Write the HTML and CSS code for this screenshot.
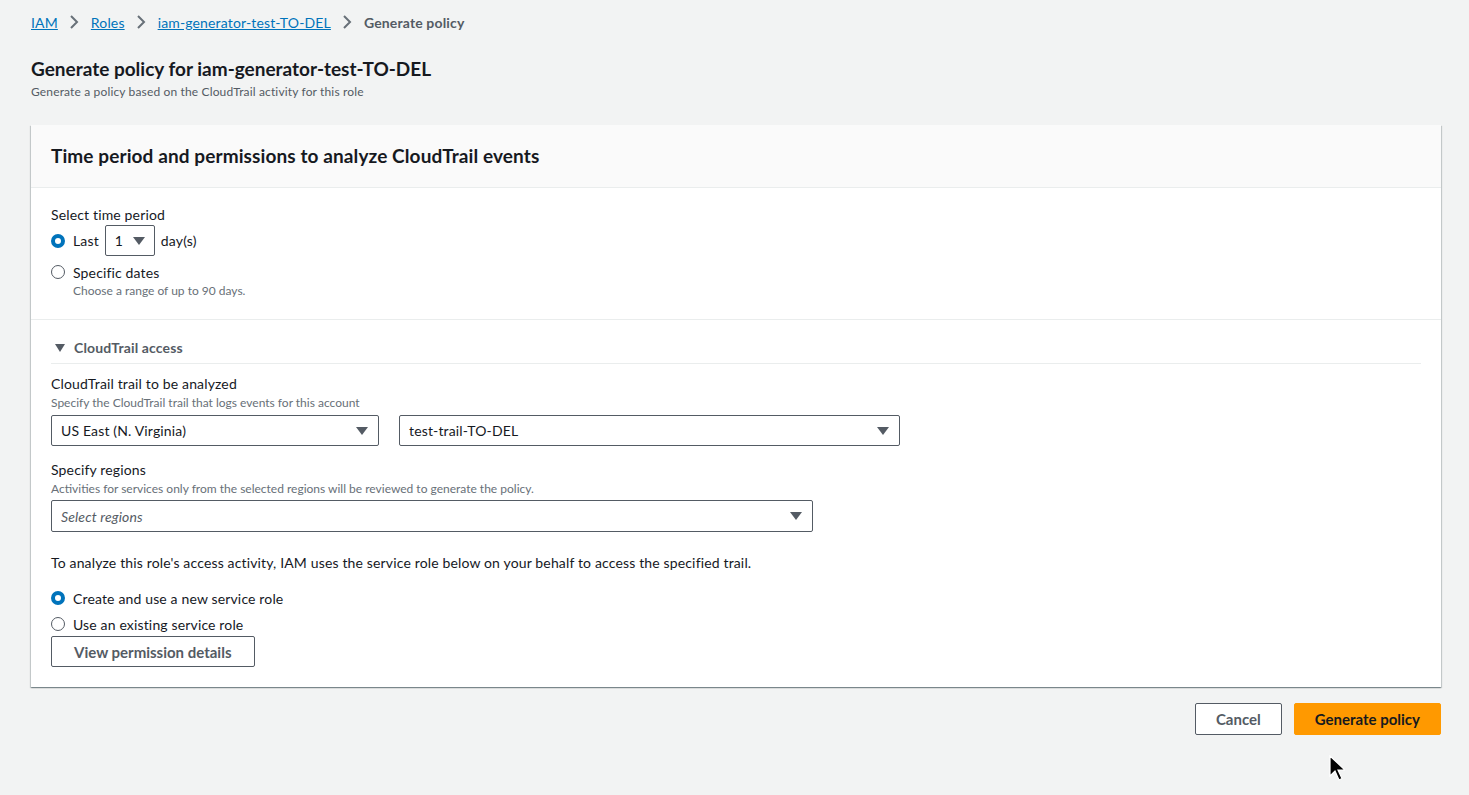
FILE: index.html
```
<!DOCTYPE html>
<html lang="en">
  <head>
    <meta charset="UTF-8" />
    <title>Generate policy</title>
    <link rel="stylesheet" href="styles.css">
  </head>
  <body>
    <nav class="breadcrumbs">
      <a href="#">IAM</a>
      <span class="chev"><svg width="10" height="14" viewBox="0 0 10 14"><path d="M2 1l6 6-6 6" fill="none" stroke="#687078" stroke-width="2"/></svg></span>
      <a href="#">Roles</a>
      <span class="chev"><svg width="10" height="14" viewBox="0 0 10 14"><path d="M2 1l6 6-6 6" fill="none" stroke="#687078" stroke-width="2"/></svg></span>
      <a href="#">iam-generator-test-TO-DEL</a>
      <span class="chev"><svg width="10" height="14" viewBox="0 0 10 14"><path d="M2 1l6 6-6 6" fill="none" stroke="#687078" stroke-width="2"/></svg></span>
      <span class="current">Generate policy</span>
    </nav>

    <div class="page-header">
      <h1>Generate policy for iam-generator-test-TO-DEL</h1>
      <p>Generate a policy based on the CloudTrail activity for this role</p>
    </div>

    <div class="card">
      <div class="card-header">
        <h2>Time period and permissions to analyze CloudTrail events</h2>
      </div>

      <div class="section">
        <div class="label">Select time period</div>
        <div class="radio-row">
          <span class="radio checked"></span>
          <span>Last</span>
          <span class="select small">1 <span class="caret"></span></span>
          <span>day(s)</span>
        </div>
        <div class="radio-row second">
          <span class="radio"></span>
          <span>Specific dates</span>
        </div>
        <div class="radio-desc">Choose a range of up to 90 days.</div>
      </div>

      <div class="section last">
        <div class="expander"><span class="exp-caret"></span>CloudTrail access</div>

        <div class="label">CloudTrail trail to be analyzed</div>
        <div class="desc">Specify the CloudTrail trail that logs events for this account</div>
        <div class="select-row">
          <div class="select region">US East (N. Virginia) <span class="caret"></span></div>
          <div class="select trail">test-trail-TO-DEL <span class="caret"></span></div>
        </div>

        <div class="label">Specify regions</div>
        <div class="desc">Activities for services only from the selected regions will be reviewed to generate the policy.</div>
        <div class="select regions"><em>Select regions</em> <span class="caret"></span></div>

        <p class="info">To analyze this role's access activity, IAM uses the service role below on your behalf to access the specified trail.</p>

        <div class="radio-row tight">
          <span class="radio checked"></span>
          <span>Create and use a new service role</span>
        </div>
        <div class="radio-row tight">
          <span class="radio"></span>
          <span>Use an existing service role</span>
        </div>
        <button class="btn details">View permission details</button>
      </div>
    </div>

    <div class="actions">
      <button class="btn">Cancel</button>
      <button class="btn primary">Generate policy</button>
    </div>

    <svg class="cursor" width="16" height="26" viewBox="0 0 16 26"><path d="M1 1v20l5-5 4 9 3-1.5-4-8.5h7z" fill="#000" stroke="#fff" stroke-width="1.2"/></svg>
  </body>
</html>
```

FILE: styles.css
```
body {
  margin: 0;
  background: #f2f3f3;
  font-family: Lato, "Liberation Sans", sans-serif;
  font-size: 14px;
  letter-spacing: 0.15px;
  color: #16191f;
  padding: 0 28px 0 31px;
  position: relative;
  height: 795px;
  box-sizing: border-box;
}
a {
  color: #0073bb;
}
.breadcrumbs {
  display: flex;
  align-items: center;
  height: 20px;
  padding-top: 12px;
  font-size: 14px;
}
.breadcrumbs a {
  text-decoration: underline;
}
.chev {
  display: flex;
  margin: 0 12px 0 11px;
}
.current {
  color: #545b64;
  font-weight: bold;
}
.page-header {
  padding-top: 24px;
}
.page-header h1 {
  margin: 0;
  font-size: 19px;
  line-height: 26px;
  font-weight: bold;
  letter-spacing: 0;
}
.page-header p {
  margin: 2px 0 0;
  font-size: 12px;
  line-height: 16px;
  color: #545b64;
}
.card {
  margin-top: 25px;
  background: #fff;
  box-shadow: 0 1px 1px 0 rgba(0, 28, 36, 0.3), 1px 1px 1px 0 rgba(0, 28, 36, 0.15), -1px 1px 1px 0 rgba(0, 28, 36, 0.15);
}
.card-header {
  background: #fafafa;
  border-bottom: 1px solid #eaeded;
  padding: 19px 20px 20px;
}
.card-header h2 {
  margin: 0;
  font-size: 19px;
  line-height: 23px;
  font-weight: bold;
  letter-spacing: 0.1px;
}
.section {
  padding: 17px 20px 20px;
  border-bottom: 1px solid #eaeded;
}
.section.last {
  border-bottom: none;
  padding-top: 12px;
}
.label {
  line-height: 20px;
}
.desc {
  font-size: 12px;
  line-height: 16px;
  color: #687078;
  margin-top: 1px;
  letter-spacing: 0;
}
.radio-row {
  display: flex;
  align-items: center;
  gap: 6px;
  height: 31px;
}
.radio-row.second {
  height: 22px;
  margin-top: 5px;
}
.radio-row.tight {
  height: 26px;
}
.radio {
  border: 1px solid #545b64;
  border-radius: 50%;
  margin: 0 2px 0 0;
  box-sizing: content-box;
  width: 12px;
  height: 12px;
}
.radio.checked {
  border: 4px solid #0073bb;
  width: 6px;
  height: 6px;
}
.radio-desc {
  font-size: 12px;
  line-height: 16px;
  color: #687078;
  padding-left: 22px;
  letter-spacing: 0;
}
.select {
  position: relative;
  border: 1px solid #545b64;
  border-radius: 2px;
  display: flex;
  align-items: center;
  box-sizing: border-box;
  padding: 0 9px;
  background: #fff;
}
.select.small {
  width: 50px;
  height: 31px;
}
.caret {
  position: absolute;
  right: 10px;
  top: 50%;
  margin-top: -4px;
  width: 0;
  height: 0;
  border-left: 6px solid transparent;
  border-right: 6px solid transparent;
  border-top: 8px solid #545b64;
}
.small .caret {
  right: 9px;
}
.expander {
  display: flex;
  align-items: center;
  font-weight: bold;
  color: #545b64;
  height: 31px;
  border-bottom: 1px solid #eaeded;
  margin: 0 0 10px 0;
  padding-left: 4px;
}
.exp-caret {
  width: 0;
  height: 0;
  border-left: 5px solid transparent;
  border-right: 5px solid transparent;
  border-top: 8px solid #545b64;
  margin-right: 9px;
}
.select-row {
  display: flex;
  gap: 20px;
  margin: 4px 0 14px;
}
.select.region {
  width: 328px;
  height: 31px;
}
.select.trail {
  width: 501px;
  height: 31px;
}
.select.regions {
  width: 762px;
  height: 32px;
  margin-top: 3px;
}
.select em {
  color: #545b64;
}
.info {
  margin: 21px 0 12px;
  line-height: 20px;
}
.btn {
  font-family: inherit;
  font-size: 15px;
  font-weight: bold;
  color: #545b64;
  background: #fff;
  border: 1px solid #545b64;
  border-radius: 2px;
  padding: 0 20px;
  height: 32px;
}
.btn.details {
  height: 31px;
  margin-top: -1px;
  padding: 0 22px;
}
.actions {
  display: flex;
  justify-content: flex-end;
  gap: 12px;
  margin-top: 16px;
}
.btn.primary {
  background: #ff9900;
  border-color: #ff9900;
  color: #16191f;
}
.cursor {
  position: absolute;
  left: 1329px;
  top: 755px;
}
```
